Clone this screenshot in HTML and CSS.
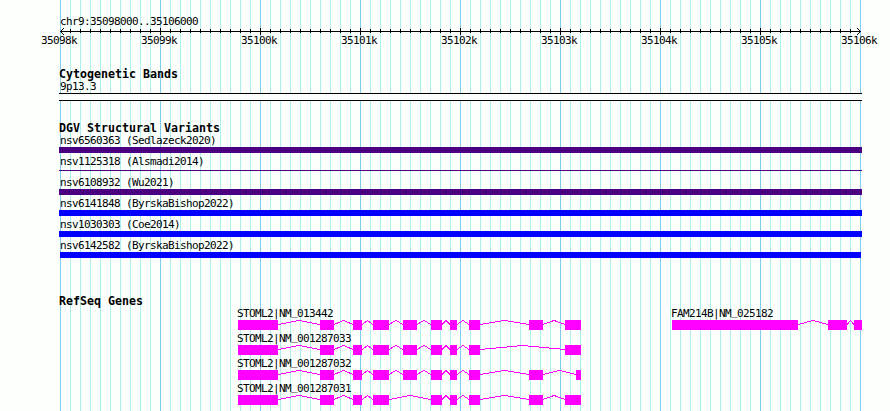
FILE: index.html
```
<!DOCTYPE html>
<html lang="en">
<head>
    <meta charset="utf-8">
    <title>chr9:35098000..35106000</title>
    <link rel="stylesheet" href="styles.css">
</head>
<body>
    <div id="panel">
        <div class="ruler">
            <div class="label">chr9:35098000..35106000</div>
            <svg id="axis" width="803" height="8"></svg>
            <div id="ticks"></div>
        </div>

        <div class="track bands">
            <h2>Cytogenetic Bands</h2>
            <div class="label">9p13.3</div>
            <div class="band"></div>
        </div>

        <div class="track variants">
            <h2>DGV Structural Variants</h2>
            <div class="variant loss"><div class="label">nsv6560363 (Sedlazeck2020)</div><div class="bar"></div></div>
            <div class="variant loss thin"><div class="label">nsv1125318 (Alsmadi2014)</div><div class="bar"></div></div>
            <div class="variant loss"><div class="label">nsv6108932 (Wu2021)</div><div class="bar"></div></div>
            <div class="variant"><div class="label">nsv6141848 (ByrskaBishop2022)</div><div class="bar"></div></div>
            <div class="variant"><div class="label">nsv1030303 (Coe2014)</div><div class="bar"></div></div>
            <div class="variant inside"><div class="label">nsv6142582 (ByrskaBishop2022)</div><div class="bar"></div></div>
        </div>

        <div class="track genes">
            <h2>RefSeq Genes</h2>
            <div id="geneRows"></div>
        </div>
    </div>

    <script>
        // axis with a tick every 100 bases
        let axis = 'M1 4.5H802M5 1L1.5 4.5L5 8M798 1L801.5 4.5L798 8';
        for (let x = 11; x < 801; x += 10) {
            axis += (x - 1) % 100 === 0 ? `M${x + 0.5} 1V8` : `M${x + 0.5} 2V6`;
        }
        document.getElementById('axis').innerHTML = `<path d="${axis}"/>`;

        const ticks = document.getElementById('ticks');
        for (let k = 35098; k <= 35106; k++) {
            ticks.innerHTML += `<span class="label">${k}k</span>`;
        }

        // exons as [start, end] in panel pixels
        const rows = [
            [
                { name: 'STOML2|NM_013442', exons: [[179, 219], [261, 275], [294, 303], [314, 330], [344, 358], [372, 383], [391, 398], [410, 421], [470, 484], [506, 522]] },
                { name: 'FAM214B|NM_025182', exons: [[613, 739], [769, 788], [795, 803]] },
            ],
            [
                { name: 'STOML2|NM_001287033', exons: [[179, 219], [261, 275], [294, 303], [314, 330], [344, 358], [372, 383], [391, 398], [410, 421], [506, 522]] },
            ],
            [
                { name: 'STOML2|NM_001287032', exons: [[179, 219], [261, 275], [294, 303], [314, 330], [344, 358], [372, 383], [391, 398], [410, 421], [470, 484], [517, 522]] },
            ],
            [
                { name: 'STOML2|NM_001287031', exons: [[179, 219], [261, 275], [294, 303], [314, 330], [372, 383], [391, 398], [410, 421], [470, 484], [506, 522]] },
            ],
        ];

        function drawGene(gene) {
            // lift the underscore clear of the exon below it
            const name = gene.name.replace(/_(.*)/, '<tspan dy="-2">_</tspan><tspan dy="2">$1</tspan>');
            let out = `<text x="${gene.exons[0][0] - 1}" y="10">${name}</text>`;
            gene.exons.forEach(([start, end], i) => {
                out += `<rect x="${start}" y="13" width="${end - start}" height="10"/>`;
                const next = gene.exons[i + 1];
                if (next) {
                    out += `<polyline points="${end},17.5 ${(end + next[0]) / 2},13.5 ${next[0]},17.5"/>`;
                }
            });
            return out;
        }

        document.getElementById('geneRows').innerHTML = rows
            .map(row => `<svg width="803" height="25">${row.map(drawGene).join('')}</svg>`)
            .join('');
    </script>
</body>
</html>
```
FILE: styles.css
```
body {
    margin: 0;
    height: 411px;
    overflow: hidden;
    background-color: #fdfffc;
    font-family: "DejaVu Sans Mono", monospace;
    color: #000;
}

#panel {
    box-sizing: border-box;
    width: 803px;
    height: 411px;
    margin-left: 59px;
    padding-top: 15px;
    /* major lines every 100px, minor every 10px */
    background-image:
        repeating-linear-gradient(to right, #7fcdee 0 1px, transparent 1px 100px),
        repeating-linear-gradient(to right, #afeeee 0 1px, transparent 1px 10px);
    background-position: 1px 0;
    background-repeat: no-repeat;
}

svg {
    display: block;
    overflow: visible;
}

.label, text {
    font-size: 11px;
    line-height: 14px;
    letter-spacing: -0.622px;
    white-space: pre;
}

.label {
    height: 12px;
    padding-left: 1px;
}

h2 {
    margin: 0;
    height: 13px;
    font-size: 11.63px;
    line-height: 15px;
    font-weight: bold;
}

/* Ruler */
#axis {
    shape-rendering: crispEdges;
    fill: none;
    stroke: #000;
}

#ticks {
    display: flex;
    width: 900px;
    margin-top: -1px;
    margin-left: -50px;
}

#ticks .label {
    width: 100px;
    padding: 0;
    text-align: center;
}

/* Tracks */
.bands {
    margin-top: 21px;
}

.band {
    box-sizing: border-box;
    height: 8px;
    margin-top: 1px;
    border: solid #000;
    border-width: 1px 0;
    background-color: #fdfffc;
}

.variants {
    margin-top: 20px;
}

.variant {
    height: 21px;
}

.bar {
    height: 6px;
    margin-top: 1px;
    background-color: #0000ff;
}

.loss .bar {
    background-color: #4b0082;
}

.thin .bar {
    height: 1px;
    margin-top: 3px;
}

.inside .bar {
    margin-left: 1px;
    margin-right: 1px;
}

.genes {
    margin-top: 34px;
}

.genes rect {
    fill: #ff00ff;
}

.genes polyline {
    fill: none;
    stroke: #ff00ff;
    shape-rendering: crispEdges;
}
```
